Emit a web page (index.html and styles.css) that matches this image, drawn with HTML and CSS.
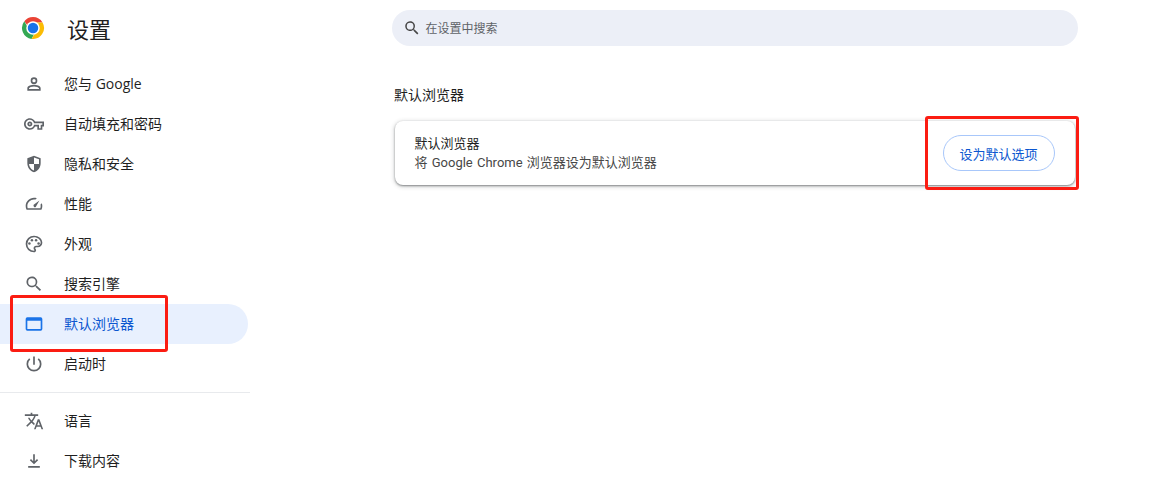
FILE: index.html
```html
<!DOCTYPE html>
<html lang="zh-CN">
<head>
<meta charset="utf-8">
<title>设置</title>
<link rel="stylesheet" href="styles.css">
</head>
<body>
<div class="page">
  <aside class="sidebar">
    <header class="brand">
      <svg class="logo" viewBox="0 0 48 48" width="24" height="24">
        <path fill="#ea4335" d="M24 2a22 22 0 0 1 19.05 11H24a11 11 0 0 0-10.2 6.9L6.6 10.6A22 22 0 0 1 24 2z"/>
        <path fill="#34a853" d="M6.6 10.6l9.5 16.9a9 9 0 0 0 10.6 7.5l-5.5 10.8A22 22 0 0 1 6.6 10.6z"/>
        <path fill="#fbbc04" d="M43.05 13A22 22 0 0 1 21.2 45.8L31 28.900a11 11 0 0 0-1-15.900z"/>
        <circle cx="24" cy="24" r="13.5" fill="#fff"/>
        <circle cx="24" cy="24" r="10.500" fill="#1a73e8"/>
      </svg>
      <h1 class="brand-title">设置</h1>
    </header>
    <nav class="nav">
      <a class="nav-item"><svg class="icon" viewBox="0 0 24 24"><path d="M12 12a4 4 0 1 0 0-8 4 4 0 0 0 0 8zm0-6a2 2 0 1 1 0 4 2 2 0 0 1 0-4zm0 7c-2.700 0-8 1.300-8 4v3h16v-3c0-2.700-5.300-4-8-4zm6 5H6v-1c.2-.7 3.300-2 6-2s5.800 1.300 6 2v1z"/></svg><span class="label">您与 Google</span></a>
      <a class="nav-item"><svg class="icon" viewBox="0 0 24 24"><path d="M22 19h-6v-4h-2.680c-1.140 2.420-3.600 4-6.320 4-3.860 0-7-3.140-7-7s3.140-7 7-7c2.720 0 5.170 1.580 6.320 4H24v6h-2v4zm-4-2h2v-4h2v-2H11.980l-.23-.67C11.050 8.340 9.150 7 7 7c-2.760 0-5 2.240-5 5s2.240 5 5 5c2.150 0 4.050-1.340 4.750-3.330l.23-.67H18v4zM7 15c-1.650 0-3-1.350-3-3s1.350-3 3-3 3 1.350 3 3-1.350 3-3 3zm0-4c-.55 0-1 .45-1 1s.45 1 1 1 1-.45 1-1-.45-1-1-1z"/></svg><span class="label">自动填充和密码</span></a>
      <a class="nav-item"><svg class="icon" viewBox="0 0 24 24"><path d="M12 2 4 5v6.100c0 5 3.400 9.700 8 10.900 4.600-1.200 8-5.900 8-10.900V5l-8-3zm6 9.100c0 .3 0 .6-.1.900H12v7.900c-3.500-1.200-6-4.800-6-8.800V12h6V4.100l6 2.300v4.700z"/></svg><span class="label">隐私和安全</span></a>
      <a class="nav-item"><svg class="icon" viewBox="0 0 24 24"><path d="M12 4.500C6.500 4.500 2 9 2 14.500c0 1.600.4 3.100 1.100 4.500h17.800c.7-1.400 1.100-2.900 1.100-4.500 0-1.200-.2-2.300-.6-3.400l-1.600 1.600c.1.600.2 1.200.2 1.800 0 .9-.1 1.700-.4 2.500H4.400a8 8 0 0 1-.4-2.500c0-4.400 3.600-8 8-8 .6 0 1.200.1 1.800.2l1.600-1.600c-1.100-.4-2.200-.6-3.400-.6zm6.500 3.300-6.900 5.200a1.900 1.900 0 0 0 2.500 2.600l4.400-7.800z"/></svg><span class="label">性能</span></a>
      <a class="nav-item"><svg class="icon" viewBox="0 0 24 24"><path d="M12 2a10 10 0 0 0 0 20c1.400 0 2.500-1.100 2.500-2.500 0-.6-.2-1.200-.6-1.600-.2-.3-.4-.6-.4-.9 0-.6.400-1 1-1H16.500A5.500 5.500 0 0 0 22 10.500C22 5.800 17.500 2 12 2zm4.500 12h-2c-1.700 0-3 1.300-3 3 0 .8.300 1.400.8 2 .1.100.2.300.2.500 0 .3-.2.500-.5.500a8 8 0 0 1 0-16c4.400 0 8 3 8 6.500 0 1.900-1.600 3.500-3.500 3.500z"/><circle cx="6.500" cy="11.500" r="1.500"/><circle cx="9.500" cy="7.500" r="1.500"/><circle cx="14.500" cy="7.500" r="1.500"/><circle cx="17.500" cy="11.500" r="1.500"/></svg><span class="label">外观</span></a>
      <a class="nav-item"><svg class="icon" viewBox="0 0 24 24"><path d="M15.500 14h-.8l-.3-.3A6.500 6.500 0 1 0 13.700 14.400l.3.300v.8l5 5 1.500-1.500-5-5zm-6 0a4.500 4.500 0 1 1 0-9 4.500 4.500 0 0 1 0 9z"/></svg><span class="label">搜索引擎</span></a>
      <a class="nav-item nav-item-active"><svg class="icon" viewBox="0 0 24 24"><path d="M20 4H4a2 2 0 0 0-2 2v12a2 2 0 0 0 2 2h16a2 2 0 0 0 2-2V6a2 2 0 0 0-2-2zm0 14H4V8h16v10z"/></svg><span class="label">默认浏览器</span></a>
      <a class="nav-item"><svg class="icon" viewBox="0 0 24 24"><path d="M13 3h-2v10h2V3zm4.800 2.200-1.400 1.400A7 7 0 1 1 7.600 6.600L6.200 5.200a9 9 0 1 0 11.600 0z"/></svg><span class="label">启动时</span></a>
      <div class="nav-divider"></div>
      <a class="nav-item"><svg class="icon" viewBox="0 0 24 24"><path d="M12.900 15.100l-2.600-2.500c1.800-2 3-4.200 3.700-6.600H17V4h-7V2H8v2H1v2h11.200c-.7 1.900-1.700 3.800-3.200 5.400-.9-1-1.700-2.200-2.300-3.400h-2c.7 1.600 1.700 3.200 3 4.600l-5.100 5L4 19l5-5 3.100 3.100.8-2zM18.500 10h-2L12 22h2l1.100-3h4.800l1.100 3h2l-4.500-12zm-2.600 7 1.600-4.300 1.600 4.300h-3.200z"/></svg><span class="label">语言</span></a>
      <a class="nav-item"><svg class="icon" viewBox="0 0 24 24"><path d="M13 4h-2v8.200L8.400 9.600 7 11l5 5 5-5-1.400-1.400-2.600 2.600V4zM5 18h14v2H5z"/></svg><span class="label">下载内容</span></a>
    </nav>
  </aside>
  <main class="main">
    <div class="search">
      <svg class="search-icon" viewBox="0 0 24 24"><path d="M15.500 14h-.8l-.3-.3A6.500 6.500 0 1 0 13.700 14.400l.3.300v.8l5 5 1.500-1.500-5-5zm-6 0a4.500 4.500 0 1 1 0-9 4.500 4.500 0 0 1 0 9z"/></svg>
      <span class="search-text">在设置中搜索</span>
    </div>
    <h2 class="section-title">默认浏览器</h2>
    <section class="card">
      <div class="card-text">
        <div class="card-title">默认浏览器</div>
        <div class="card-desc">将 Google Chrome 浏览器设为默认浏览器</div>
      </div>
      <button class="btn">设为默认选项</button>
    </section>
  </main>
</div>
<div class="mark mark-nav"></div>
<div class="mark mark-btn"></div>
</body>
</html>
```
FILE: styles.css
```css
* { box-sizing: border-box; }
html, body { margin: 0; height: 100%; background: #fff; overflow: hidden; }
body {
  font-family: "Open Sans", "Noto Sans CJK SC", sans-serif;
  color: #1f1f1f;
  position: relative;
}
.page { display: flex; height: 492px; }
.sidebar { width: 250px; flex: none; }
.brand { display: flex; align-items: center; height: 56px; padding-left: 21px; gap: 22px; }
.logo { flex: none; }
.brand-title { margin: 2px 0 0; font-size: 22px; font-weight: 400; line-height: 54px; color: #1f1f1f; }
.nav { padding-top: 8px; }
.nav-item {
  display: flex; align-items: center; height: 40px; width: 248px;
  padding-left: 24px; gap: 20px;
  font-size: 14px; color: #1f1f1f;
  border-radius: 0 20px 20px 0;
}
.label { margin-bottom: 2px; }
.nav-item-active { background: #e8f0fe; color: #0b57d0; }
.icon { width: 20px; height: 20px; flex: none; fill: #5f6368; }
.nav-item-active .icon { fill: #1a73e8; }
.nav-divider { height: 1px; background: #e8eaed; width: 250px; margin: 8px 0; }
.main { width: 686px; margin-left: 142px; padding-top: 10px; }
.search {
  display: flex; align-items: center; height: 36px; border-radius: 18px;
  background: #ecEFf7; padding-left: 11px; gap: 4.5px;
}
.search-icon { width: 18px; height: 18px; fill: #474747; flex: none; }
.search-text { font-size: 12px; color: #5f6368; }
.section-title { margin: 39px 0 0 2px; font-size: 14px; line-height: 20px; font-weight: 400; color: #1f1f1f; }
.card {
  display: flex; align-items: center; justify-content: space-between;
  margin: 16px 3px 0; height: 64px; padding: 0 20px 0 19.5px;
  background: #fff; border-radius: 8px;
  box-shadow: 0 1px 2px rgba(60,64,67,.55), 0 1px 4px 1px rgba(60,64,67,.2);
}
.card-title { font-size: 13px; line-height: 20px; color: #1f1f1f; }
.card-desc { font-family: Roboto, "Noto Sans CJK SC", sans-serif; font-size: 13px; line-height: 20px; color: #474747; word-spacing: 1px; }
.btn {
  width: 112px; height: 36px; border-radius: 18px; background: #fff;
  border: 1px solid #a8c7fa; color: #0b57d0; font-family: inherit; font-size: 13px; padding: 0 1px 0 0;
}
.mark { position: absolute; border: 3px solid #fb1c12; border-radius: 3px; pointer-events: none; }
.mark-nav { left: 10px; top: 295px; width: 158px; height: 57px; }
.mark-btn { left: 925px; top: 116px; width: 154px; height: 74px; }
```
